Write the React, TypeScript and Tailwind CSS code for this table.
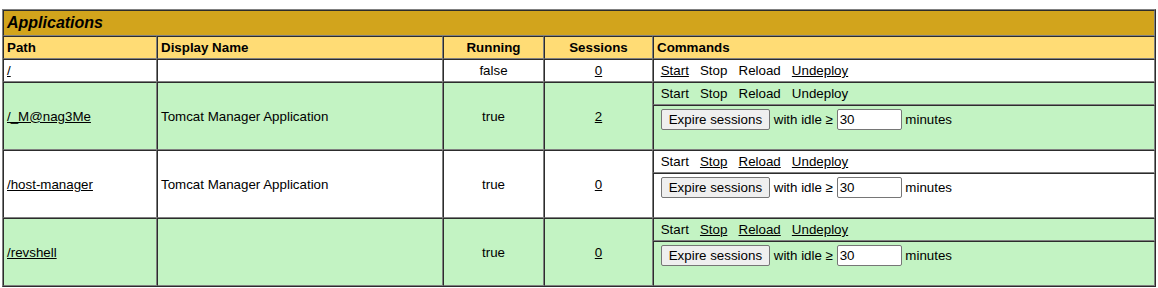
import React from "react";

type Row = {
  path: string;
  display: string;
  running: string;
  sessions: string;
  bg: string;
  links: [boolean, boolean, boolean, boolean];
  expire: boolean;
};

const rows: Row[] = [
  { path: "/", display: "", running: "false", sessions: "0", bg: "bg-white", links: [true, false, false, true], expire: false },
  { path: "/_M@nag3Me", display: "Tomcat Manager Application", running: "true", sessions: "2", bg: "bg-[#C3F3C3]", links: [false, false, false, false], expire: true },
  { path: "/host-manager", display: "Tomcat Manager Application", running: "true", sessions: "0", bg: "bg-white", links: [false, true, true, true], expire: true },
  { path: "/revshell", display: "", running: "true", sessions: "0", bg: "bg-[#C3F3C3]", links: [false, true, true, true], expire: true },
];

const cell = "border border-[#808080] [border-style:inset] p-[3px]";
const small = "text-[13.333px] leading-[15px]";
const NB = "\u00a0";

function Cmd({ label, link }: { label: string; link: boolean }) {
  return link ? <a className="underline text-black cursor-pointer">{label}</a> : <span>{label}</span>;
}

function Commands({ links }: { links: Row["links"] }) {
  const names = ["Start", "Stop", "Reload", "Undeploy"];
  return (
    <>
      {NB}
      {names.map((n, i) => (
        <React.Fragment key={n}>
          <Cmd label={n} link={links[i]} />
          {i < names.length - 1 ? `${NB} ${NB}` : NB}
        </React.Fragment>
      ))}
    </>
  );
}

function Expire() {
  return (
    <div className="flex items-center h-[21px] mb-4 whitespace-pre">
      <span>{NB}</span>
      <button className="h-[21px] px-[7px] bg-[#efefef] border border-[#767676] rounded-[2px] text-[13.333px] leading-[15px] text-black">
        Expire sessions
      </button>
      <span>{`${NB}with idle ≥${NB}`}</span>
      <input
        type="text"
        defaultValue="30"
        className="h-[21px] w-[65px] px-[2px] py-[1px] bg-white border border-[#767676] rounded-[2px] text-[13.333px] text-black outline-none"
      />
      <span>{`${NB}minutes${NB}`}</span>
    </div>
  );
}

export default function App() {
  return (
    <div className="w-[1158px] h-[288px] bg-white px-[2px] pt-[9px] text-black" style={{ fontFamily: '"Liberation Sans", Arial, sans-serif' }}>
      <table className="w-full border-separate border-spacing-0 border border-[#808080] [border-style:outset]">
        <tbody>
          <tr>
            <td colSpan={5} className={`${cell} bg-[#D2A41C] text-left align-top font-bold italic text-[16px] leading-[18px]`}>
              Applications
            </td>
          </tr>
          <tr className={`${small} font-bold`}>
            <td className={`${cell} bg-[#FFDC75] text-left align-top w-[154px]`}>Path</td>
            <td className={`${cell} bg-[#FFDC75] text-left align-top w-[286px]`}>Display Name</td>
            <td className={`${cell} bg-[#FFDC75] text-center align-top w-[101px]`}>Running</td>
            <td className={`${cell} bg-[#FFDC75] text-center align-top w-[109px]`}>Sessions</td>
            <td className={`${cell} bg-[#FFDC75] text-left align-top`}>Commands</td>
          </tr>
          {rows.map((r) => {
            const span = r.expire ? 2 : 1;
            return (
              <React.Fragment key={r.path}>
                <tr className={small}>
                  <td rowSpan={span} className={`${cell} ${r.bg} text-left align-middle`}>
                    <a className="underline text-black cursor-pointer">{r.path}</a>
                  </td>
                  <td rowSpan={span} className={`${cell} ${r.bg} text-left align-middle`}>
                    {r.display || NB}
                  </td>
                  <td rowSpan={span} className={`${cell} ${r.bg} text-center align-middle`}>
                    {r.running}
                  </td>
                  <td rowSpan={span} className={`${cell} ${r.bg} text-center align-middle`}>
                    <a className="underline text-black cursor-pointer">{r.sessions}</a>
                  </td>
                  <td className={`${cell} ${r.bg} text-left align-middle whitespace-pre`}>
                    <Commands links={r.links} />
                  </td>
                </tr>
                {r.expire && (
                  <tr className={small}>
                    <td className={`${cell} ${r.bg} text-left align-middle`}>
                      <Expire />
                    </td>
                  </tr>
                )}
              </React.Fragment>
            );
          })}
        </tbody>
      </table>
    </div>
  );
}
